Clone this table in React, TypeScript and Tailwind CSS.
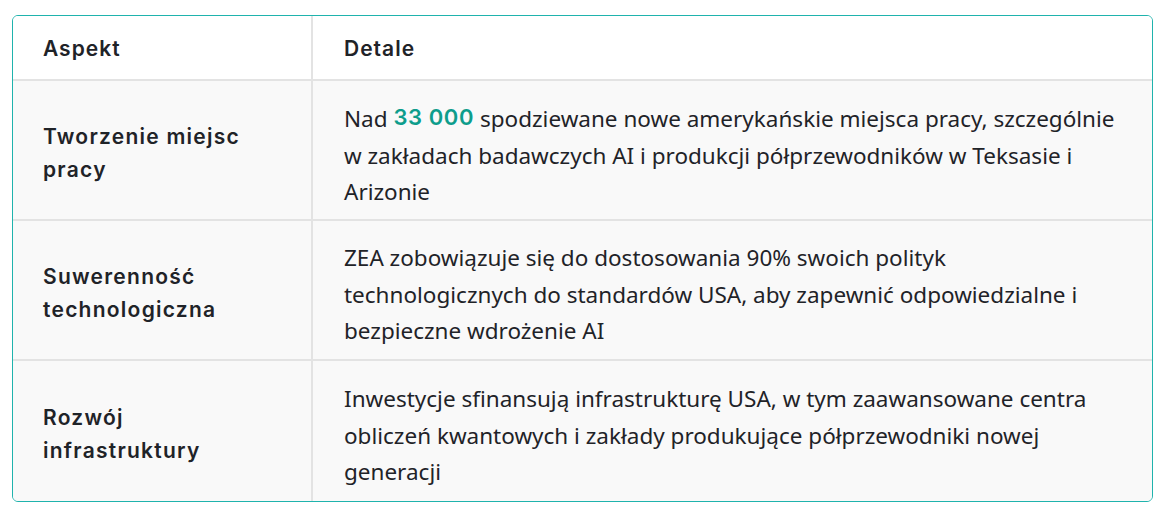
import type { ReactNode } from 'react'

const rows: { aspect: string; details: ReactNode }[] = [
  {
    aspect: 'Tworzenie miejsc pracy',
    details: (
      <>
        Nad{' '}
        <span className="align-[2px] font-['Inter',sans-serif] text-[22px] font-semibold tracking-[0.6px] text-[#0e9d8c]">
          33 000
        </span>{' '}
        spodziewane nowe amerykańskie miejsca pracy, szczególnie
        <br />w zakładach badawczych AI i produkcji półprzewodników w Teksasie i
        <br />
        Arizonie
      </>
    ),
  },
  {
    aspect: 'Suwerenność technologiczna',
    details: (
      <>
        ZEA zobowiązuje się do dostosowania 90% swoich polityk
        <br />
        technologicznych do standardów USA, aby zapewnić odpowiedzialne i
        <br />
        bezpieczne wdrożenie AI
      </>
    ),
  },
  {
    aspect: 'Rozwój infrastruktury',
    details: (
      <>
        Inwestycje sfinansują infrastrukturę USA, w tym zaawansowane centra
        <br />
        obliczeń kwantowych i zakłady produkujące półprzewodniki nowej
        <br />
        generacji
      </>
    ),
  },
]

export default function App() {
  return (
    <div className="min-h-[510px] w-[1164px] bg-white pl-3 pt-[15px]">
      <div className="w-[1141px] overflow-hidden rounded-md border border-[#1fb3ad] text-[#1f2328]">
        <div className="grid h-[65px] grid-cols-[300px_1fr] border-b-2 border-[#e3e3e3] bg-white">
          <div className="flex items-center border-r-2 border-[#e3e3e3] pl-[30px] pt-[2px] font-['Inter',sans-serif] text-[21px] font-semibold tracking-[1px]">
            Aspekt
          </div>
          <div className="flex items-center pl-[31px] pt-[2px] font-['Inter',sans-serif] text-[21px] font-semibold tracking-[1px]">
            Detale
          </div>
        </div>
        {rows.map((r, i) => (
          <div
            key={r.aspect}
            className={`grid h-[140px] grid-cols-[300px_1fr] bg-[#f9f9f9] ${i < rows.length - 1 ? 'border-b-2 border-[#e3e3e3]' : ''}`}
          >
            <div className="flex items-center border-r-2 border-[#e3e3e3] pl-[30px] pt-[5px]">
              <div className="pr-8 font-['Inter',sans-serif] text-[21px] font-semibold leading-[33px] tracking-[1.25px]">
                {r.aspect}
              </div>
            </div>
            <div className="flex items-center pl-[31px] pt-[10px]">
              <div className="whitespace-nowrap font-['Noto_Sans',sans-serif] text-[22.5px] leading-[36.5px]">
                {r.details}
              </div>
            </div>
          </div>
        ))}
      </div>
    </div>
  )
}
